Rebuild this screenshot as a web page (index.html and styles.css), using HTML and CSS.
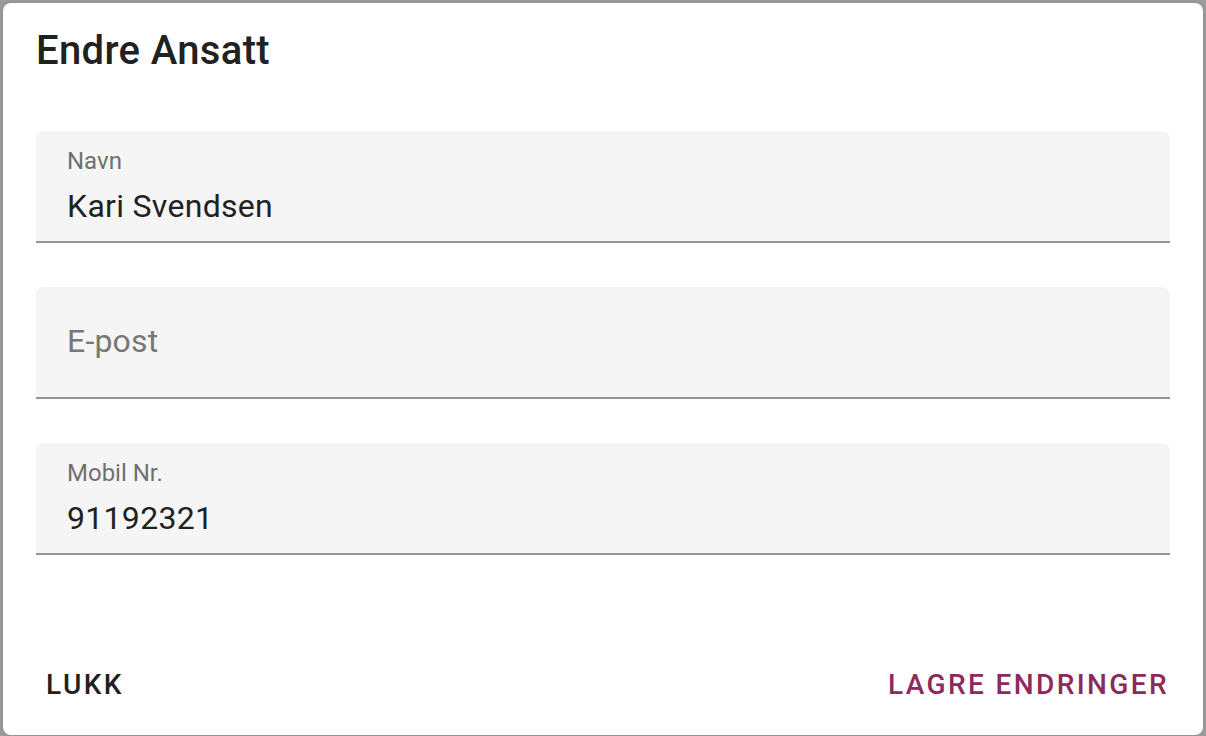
FILE: index.html
```html
<!DOCTYPE html>
<html lang="no">
<head>
<meta charset="utf-8">
<title>Endre Ansatt</title>
<link rel="stylesheet" href="styles.css">
</head>
<body>
<div class="dialog">
  <h2 class="dialog-title">Endre Ansatt</h2>
  <div class="dialog-content">
    <div class="field">
      <span class="field-label">Navn</span>
      <span class="field-value">Kari Svendsen</span>
    </div>
    <div class="field">
      <span class="field-placeholder">E-post</span>
    </div>
    <div class="field">
      <span class="field-label">Mobil Nr.</span>
      <span class="field-value">91192321</span>
    </div>
  </div>
  <div class="dialog-actions">
    <button class="btn btn-default">Lukk</button>
    <button class="btn btn-primary">Lagre endringer</button>
  </div>
</div>
</body>
</html>
```

FILE: styles.css
```css
* { box-sizing: border-box; }

html, body {
  margin: 0;
  height: 100%;
}

body {
  background: #9d9d9d;
  font-family: Roboto, "Liberation Sans", sans-serif;
  overflow: hidden;
  padding: 3px;
}

.dialog {
  width: 1200px;
  height: 732px;
  background: #ffffff;
  border-radius: 8px;
  display: flex;
  flex-direction: column;
  box-shadow: 0 0 6px rgba(0,0,0,0.12);
}

.dialog-title {
  margin: 0;
  padding: 16px 33px 0;
  font-size: 40px;
  line-height: 64px;
  font-weight: 500;
  color: #212121;
  letter-spacing: 0.35px;
}

.dialog-content {
  display: flex;
  flex-direction: column;
  gap: 44px;
  padding: 48px 33px 0;
}

.field {
  height: 112px;
  background: #f5f5f5;
  border-radius: 8px 8px 0 0;
  border-bottom: 2px solid #949494;
  padding: 18px 31px 0;
  display: flex;
  flex-direction: column;
}

.field-label {
  font-size: 24px;
  line-height: 24px;
  color: #707070;
}

.field-value {
  margin-top: 14px;
  font-size: 32px;
  line-height: 38px;
  color: #212121;
  letter-spacing: 0.3px;
}

.field-placeholder {
  margin-top: 20px;
  font-size: 32px;
  line-height: 32px;
  color: #777777;
  letter-spacing: 0.2px;
}

.dialog-actions {
  margin-top: auto;
  display: flex;
  justify-content: space-between;
  align-items: center;
  padding: 0 24px 26px 33px;
}

.btn {
  background: none;
  border: none;
  font-family: inherit;
  font-size: 28px;
  font-weight: 500;
  line-height: 49px;
  letter-spacing: 2.4px;
  text-transform: uppercase;
  padding: 0 10px;
  cursor: pointer;
}

.btn-default { color: #212121; }
.btn-primary { color: #8c2b5b; }
```
